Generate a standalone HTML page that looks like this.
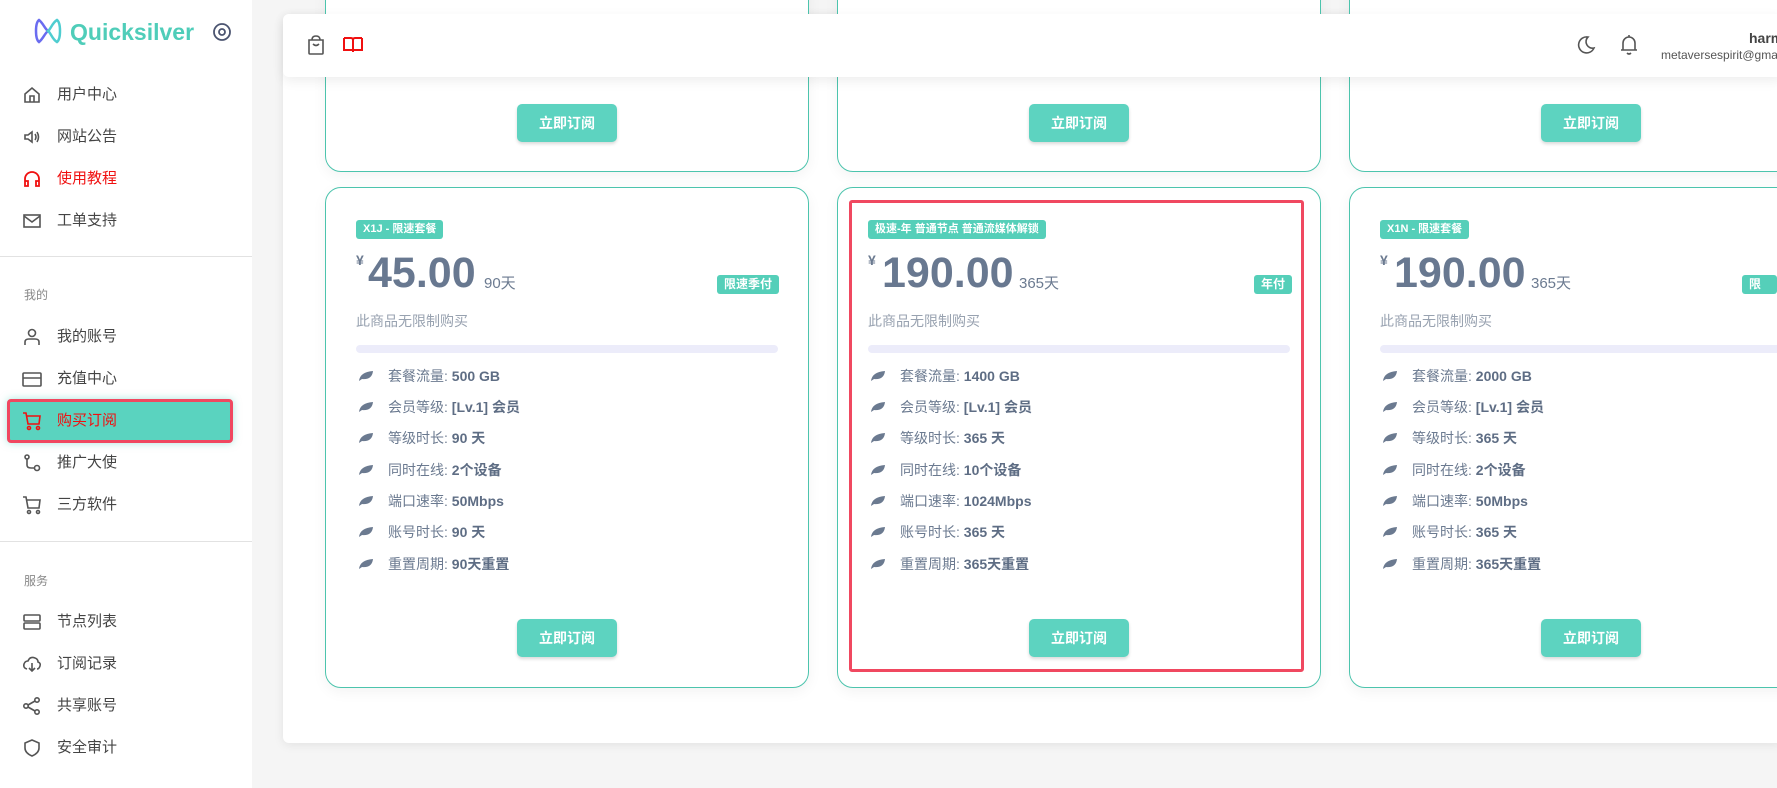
<!DOCTYPE html>
<html><head><meta charset="utf-8"><style>
*{margin:0;padding:0;box-sizing:border-box}
body{width:1777px;height:788px;overflow:hidden;background:#f5f5f5;font-family:"Liberation Sans","Noto Sans CJK SC",sans-serif;position:relative}
.side{position:absolute;left:0;top:0;width:252px;height:788px;background:#fff}
.logo{position:absolute;left:70px;top:19px;font-size:23px;font-weight:bold;color:#4fcdb9}
.nav{position:absolute;left:57px;font-size:15px;color:#444;line-height:20px}
.ico{position:absolute;left:22px;width:20px;height:20px}
.sec{position:absolute;left:24px;font-size:12px;color:#888}
.hr{position:absolute;left:0;width:252px;height:1px;background:#e2e2e2}
.panel{position:absolute;left:283px;top:14px;width:1500px;height:729px;background:#fff;box-shadow:0 2px 10px rgba(0,0,0,.08);border-radius:6px}
.head{position:absolute;left:283px;top:14px;width:1500px;height:63px;background:#fff;box-shadow:0 4px 12px rgba(0,0,0,.07);border-radius:6px;z-index:5}
.card{position:absolute;border:1px solid #4cc4ad;border-radius:16px;background:#fff;box-shadow:0 4px 14px rgba(0,0,0,.05)}
.btn{position:absolute;width:100px;height:38px;background:#5dd3c0;color:#fff;border-radius:5px;font-size:14px;font-weight:bold;text-align:center;line-height:38px;box-shadow:0 2px 3px rgba(0,0,0,.15)}
.tag{position:absolute;background:#55cfb9;color:#fff;font-size:11px;font-weight:bold;padding:0 7px;height:19px;line-height:19px;border-radius:3px}
.yen{position:absolute;font-size:14px;color:#6b7a90;font-weight:bold}
.price{position:absolute;font-size:43px;font-weight:bold;color:#687890;line-height:44px}
.days{position:absolute;font-size:15px;color:#6b7a90}
.note{position:absolute;font-size:14px;color:#98a2b0}
.bar{position:absolute;height:8px;background:#ececfa;border-radius:4px}
.feat{position:absolute;font-size:14px;color:#6b7a90;line-height:20px}
.feat b{color:#5e6d84}
.leaf{display:inline-block;width:16px;height:12px;margin-right:14px;vertical-align:-1px}
</style></head><body>
<div class="side">
<svg style="position:absolute;left:34px;top:17px" width="28" height="28" viewBox="0 0 28 28"><path d="M5 3C1 6 1 22 5 25C9 22 11 16 14 14C11 12 9 6 5 3Z" fill="none" stroke="#6a6cf0" stroke-width="2.5"/><path d="M23 3C27 6 27 22 23 25C18 22 17 16 14 14C17 12 18 6 23 3Z" fill="none" stroke="#4fcdd0" stroke-width="2.5"/></svg>
<div class="logo">Quicksilver</div>
<svg style="position:absolute;left:212px;top:22px" width="20" height="20" viewBox="0 0 20 20"><circle cx="10" cy="10" r="8" fill="none" stroke="#4b5470" stroke-width="1.8"/><circle cx="10" cy="10" r="3" fill="none" stroke="#4b5470" stroke-width="1.8"/></svg>

<svg class="ico" style="top:85px" viewBox="0 0 20 20" fill="none" stroke="#555" stroke-width="1.6"><path d="M3 9L10 3L17 9V17H3Z M8 17V11H12V17"/></svg>
<div class="nav" style="top:85px">用户中心</div>
<svg class="ico" style="top:127px" viewBox="0 0 20 20" fill="none" stroke="#555" stroke-width="1.6"><path d="M3 8H6L10 5V15L6 12H3Z M13 7Q15 10 13 13 M15 5Q18 10 15 15"/></svg>
<div class="nav" style="top:127px">网站公告</div>
<svg class="ico" style="top:169px" viewBox="0 0 20 20" fill="none" stroke="#f01010" stroke-width="1.8"><path d="M3 15V10A7 7 0 0 1 17 10V15 M3 12H6V17H3Z M14 12H17V17H14Z"/></svg>
<div class="nav" style="top:169px;color:#f01010">使用教程</div>
<svg class="ico" style="top:211px" viewBox="0 0 20 20" fill="none" stroke="#555" stroke-width="1.6"><rect x="2" y="4" width="16" height="12"/><path d="M2 5L10 11L18 5"/></svg>
<div class="nav" style="top:211px">工单支持</div>
<div class="hr" style="top:256px"></div>
<div class="sec" style="top:286px">我的</div>
<svg class="ico" style="top:327px" viewBox="0 0 20 20" fill="none" stroke="#555" stroke-width="1.6"><circle cx="10" cy="6" r="3.5"/><path d="M3 18V15Q3 12 7 12H13Q17 12 17 15V18"/></svg>
<div class="nav" style="top:327px">我的账号</div>
<svg class="ico" style="top:369px" viewBox="0 0 20 20" fill="none" stroke="#555" stroke-width="1.6"><rect x="1" y="4" width="18" height="13" rx="1"/><path d="M1 9H19"/></svg>
<div class="nav" style="top:369px">充值中心</div>
<div style="position:absolute;left:7px;top:399px;width:226px;height:44px;background:#5ad3bf;border:3px solid #f04860;border-radius:4px;box-shadow:0 0 8px rgba(80,210,190,.5)"></div>
<svg class="ico" style="top:411px" viewBox="0 0 20 20" fill="none" stroke="#f01010" stroke-width="1.6"><path d="M1 2H4L6 13H17L18 5H5"/><circle cx="7" cy="17" r="1.5"/><circle cx="16" cy="17" r="1.5"/></svg>
<div class="nav" style="top:411px;color:#f01010">购买订阅</div>
<svg class="ico" style="top:453px" viewBox="0 0 20 20" fill="none" stroke="#555" stroke-width="1.6"><circle cx="5" cy="4" r="2"/><path d="M5 6V12Q5 15 9 15H12"/><circle cx="15" cy="15" r="2.5"/></svg>
<div class="nav" style="top:453px">推广大使</div>
<svg class="ico" style="top:495px" viewBox="0 0 20 20" fill="none" stroke="#555" stroke-width="1.6"><path d="M1 2H4L6 13H17L18 5H5"/><circle cx="7" cy="17" r="1.5"/><circle cx="16" cy="17" r="1.5"/></svg>
<div class="nav" style="top:495px">三方软件</div>
<div class="hr" style="top:541px"></div>
<div class="sec" style="top:572px">服务</div>
<svg class="ico" style="top:612px" viewBox="0 0 20 20" fill="none" stroke="#555" stroke-width="1.6"><rect x="2" y="3" width="16" height="6" rx="1"/><rect x="2" y="11" width="16" height="6" rx="1"/></svg>
<div class="nav" style="top:612px">节点列表</div>
<svg class="ico" style="top:654px" viewBox="0 0 20 20" fill="none" stroke="#555" stroke-width="1.6"><path d="M5 15Q1 14 2 10Q3 7 6 7Q8 2 13 4Q16 5 16 8Q19 9 18 12Q17 15 15 15 M10 9V17 M7 14L10 17L13 14"/></svg>
<div class="nav" style="top:654px">订阅记录</div>
<svg class="ico" style="top:696px" viewBox="0 0 20 20" fill="none" stroke="#555" stroke-width="1.6"><circle cx="15" cy="4" r="2.2"/><circle cx="4" cy="10" r="2.2"/><circle cx="15" cy="16" r="2.2"/><path d="M6 9L13 5 M6 11L13 15"/></svg>
<div class="nav" style="top:696px">共享账号</div>
<svg class="ico" style="top:738px" viewBox="0 0 20 20" fill="none" stroke="#555" stroke-width="1.6"><path d="M10 2L17 5V10Q17 15 10 18Q3 15 3 10V5Z"/></svg>
<div class="nav" style="top:738px">安全审计</div>
</div>

<div class="panel"></div>
<!-- top row cards partially hidden -->
<div class="card" style="left:325px;top:-20px;width:484px;height:192px"></div>
<div class="card" style="left:837px;top:-20px;width:484px;height:192px"></div>
<div class="card" style="left:1349px;top:-20px;width:484px;height:192px"></div>
<div class="btn" style="left:517px;top:104px">立即订阅</div>
<div class="btn" style="left:1029px;top:104px">立即订阅</div>
<div class="btn" style="left:1541px;top:104px">立即订阅</div>

<div class="head">
<svg style="position:absolute;left:23px;top:20px" width="20" height="22" viewBox="0 0 20 22" fill="none" stroke="#555" stroke-width="1.6"><path d="M3 6H17V19Q17 20 16 20H4Q3 20 3 19Z M6 6Q6 2 10 2Q14 2 14 6 M7 10Q10 13 13 10"/></svg>
<svg style="position:absolute;left:60px;top:22px" width="20" height="18" viewBox="0 0 20 18" fill="none" stroke="#f01010" stroke-width="2"><path d="M1 2H8Q10 2 10 4V16 M19 2H12Q10 2 10 4 M1 2V14H10H19V2"/></svg>
<svg style="position:absolute;left:1293px;top:21px" width="20" height="20" viewBox="0 0 20 20" fill="none" stroke="#555" stroke-width="1.6"><path d="M12 2A8 8 0 1 0 18 13A6.5 6.5 0 0 1 12 2Z"/></svg>
<svg style="position:absolute;left:1336px;top:20px" width="20" height="22" viewBox="0 0 20 22" fill="none" stroke="#555" stroke-width="1.6"><path d="M4 16V9A6 6 0 0 1 16 9V16H2H18 M10 1V3 M8 19Q10 21 12 19"/></svg>
<div style="position:absolute;left:1466px;top:16px;font-size:14px;font-weight:bold;color:#444">harmony</div>
<div style="position:absolute;left:1378px;top:34px;font-size:12px;color:#555">metaversespirit@gmail.com</div>
</div>

<!-- card 1 -->
<div class="card" style="left:325px;top:187px;width:484px;height:501px"></div>
<div class="tag" style="left:356px;top:220px">X1J - 限速套餐</div>
<div class="yen" style="left:356px;top:252px">¥</div>
<div class="price" style="left:368px;top:251px">45.00</div>
<div class="days" style="left:484px;top:272px">90天</div>
<div class="tag" style="left:717px;top:275px;font-size:12px">限速季付</div>
<div class="note" style="left:356px;top:311px">此商品无限制购买</div>
<div class="bar" style="left:356px;top:345px;width:422px"></div>

<!-- card 2 -->
<div class="card" style="left:837px;top:187px;width:484px;height:501px"></div>
<div style="position:absolute;left:849px;top:200px;width:455px;height:472px;border:3px solid #f04860;border-radius:3px"></div>
<div class="tag" style="left:868px;top:220px">极速-年 普通节点 普通流媒体解锁</div>
<div class="yen" style="left:868px;top:252px">¥</div>
<div class="price" style="left:882px;top:251px">190.00</div>
<div class="days" style="left:1019px;top:272px">365天</div>
<div class="tag" style="left:1254px;top:275px;font-size:12px">年付</div>
<div class="note" style="left:868px;top:311px">此商品无限制购买</div>
<div class="bar" style="left:868px;top:345px;width:422px"></div>

<!-- card 3 -->
<div class="card" style="left:1349px;top:187px;width:484px;height:501px"></div>
<div class="tag" style="left:1380px;top:220px">X1N - 限速套餐</div>
<div class="yen" style="left:1380px;top:252px">¥</div>
<div class="price" style="left:1394px;top:251px">190.00</div>
<div class="days" style="left:1531px;top:272px">365天</div>
<div class="tag" style="left:1742px;top:275px;font-size:12px">限速年付</div>
<div class="note" style="left:1380px;top:311px">此商品无限制购买</div>
<div class="bar" style="left:1380px;top:345px;width:420px"></div>

<div id="feats"></div>
<div class="btn" style="left:517px;top:619px">立即订阅</div>
<div class="btn" style="left:1029px;top:619px">立即订阅</div>
<div class="btn" style="left:1541px;top:619px">立即订阅</div>

<!-- features -->
<div class="feat" style="left:358px;top:366px"><svg class="leaf" viewBox="0 0 16 12"><path d="M1 11Q2 2 15 1Q14 10 4 9Z" fill="#6b7a90"/></svg>套餐流量: <b>500 GB</b></div>
<div class="feat" style="left:358px;top:397px"><svg class="leaf" viewBox="0 0 16 12"><path d="M1 11Q2 2 15 1Q14 10 4 9Z" fill="#6b7a90"/></svg>会员等级: <b>[Lv.1] 会员</b></div>
<div class="feat" style="left:358px;top:428px"><svg class="leaf" viewBox="0 0 16 12"><path d="M1 11Q2 2 15 1Q14 10 4 9Z" fill="#6b7a90"/></svg>等级时长: <b>90 天</b></div>
<div class="feat" style="left:358px;top:460px"><svg class="leaf" viewBox="0 0 16 12"><path d="M1 11Q2 2 15 1Q14 10 4 9Z" fill="#6b7a90"/></svg>同时在线: <b>2个设备</b></div>
<div class="feat" style="left:358px;top:491px"><svg class="leaf" viewBox="0 0 16 12"><path d="M1 11Q2 2 15 1Q14 10 4 9Z" fill="#6b7a90"/></svg>端口速率: <b>50Mbps</b></div>
<div class="feat" style="left:358px;top:522px"><svg class="leaf" viewBox="0 0 16 12"><path d="M1 11Q2 2 15 1Q14 10 4 9Z" fill="#6b7a90"/></svg>账号时长: <b>90 天</b></div>
<div class="feat" style="left:358px;top:554px"><svg class="leaf" viewBox="0 0 16 12"><path d="M1 11Q2 2 15 1Q14 10 4 9Z" fill="#6b7a90"/></svg>重置周期: <b>90天重置</b></div>

<div class="feat" style="left:870px;top:366px"><svg class="leaf" viewBox="0 0 16 12"><path d="M1 11Q2 2 15 1Q14 10 4 9Z" fill="#6b7a90"/></svg>套餐流量: <b>1400 GB</b></div>
<div class="feat" style="left:870px;top:397px"><svg class="leaf" viewBox="0 0 16 12"><path d="M1 11Q2 2 15 1Q14 10 4 9Z" fill="#6b7a90"/></svg>会员等级: <b>[Lv.1] 会员</b></div>
<div class="feat" style="left:870px;top:428px"><svg class="leaf" viewBox="0 0 16 12"><path d="M1 11Q2 2 15 1Q14 10 4 9Z" fill="#6b7a90"/></svg>等级时长: <b>365 天</b></div>
<div class="feat" style="left:870px;top:460px"><svg class="leaf" viewBox="0 0 16 12"><path d="M1 11Q2 2 15 1Q14 10 4 9Z" fill="#6b7a90"/></svg>同时在线: <b>10个设备</b></div>
<div class="feat" style="left:870px;top:491px"><svg class="leaf" viewBox="0 0 16 12"><path d="M1 11Q2 2 15 1Q14 10 4 9Z" fill="#6b7a90"/></svg>端口速率: <b>1024Mbps</b></div>
<div class="feat" style="left:870px;top:522px"><svg class="leaf" viewBox="0 0 16 12"><path d="M1 11Q2 2 15 1Q14 10 4 9Z" fill="#6b7a90"/></svg>账号时长: <b>365 天</b></div>
<div class="feat" style="left:870px;top:554px"><svg class="leaf" viewBox="0 0 16 12"><path d="M1 11Q2 2 15 1Q14 10 4 9Z" fill="#6b7a90"/></svg>重置周期: <b>365天重置</b></div>

<div class="feat" style="left:1382px;top:366px"><svg class="leaf" viewBox="0 0 16 12"><path d="M1 11Q2 2 15 1Q14 10 4 9Z" fill="#6b7a90"/></svg>套餐流量: <b>2000 GB</b></div>
<div class="feat" style="left:1382px;top:397px"><svg class="leaf" viewBox="0 0 16 12"><path d="M1 11Q2 2 15 1Q14 10 4 9Z" fill="#6b7a90"/></svg>会员等级: <b>[Lv.1] 会员</b></div>
<div class="feat" style="left:1382px;top:428px"><svg class="leaf" viewBox="0 0 16 12"><path d="M1 11Q2 2 15 1Q14 10 4 9Z" fill="#6b7a90"/></svg>等级时长: <b>365 天</b></div>
<div class="feat" style="left:1382px;top:460px"><svg class="leaf" viewBox="0 0 16 12"><path d="M1 11Q2 2 15 1Q14 10 4 9Z" fill="#6b7a90"/></svg>同时在线: <b>2个设备</b></div>
<div class="feat" style="left:1382px;top:491px"><svg class="leaf" viewBox="0 0 16 12"><path d="M1 11Q2 2 15 1Q14 10 4 9Z" fill="#6b7a90"/></svg>端口速率: <b>50Mbps</b></div>
<div class="feat" style="left:1382px;top:522px"><svg class="leaf" viewBox="0 0 16 12"><path d="M1 11Q2 2 15 1Q14 10 4 9Z" fill="#6b7a90"/></svg>账号时长: <b>365 天</b></div>
<div class="feat" style="left:1382px;top:554px"><svg class="leaf" viewBox="0 0 16 12"><path d="M1 11Q2 2 15 1Q14 10 4 9Z" fill="#6b7a90"/></svg>重置周期: <b>365天重置</b></div>
</body></html>
